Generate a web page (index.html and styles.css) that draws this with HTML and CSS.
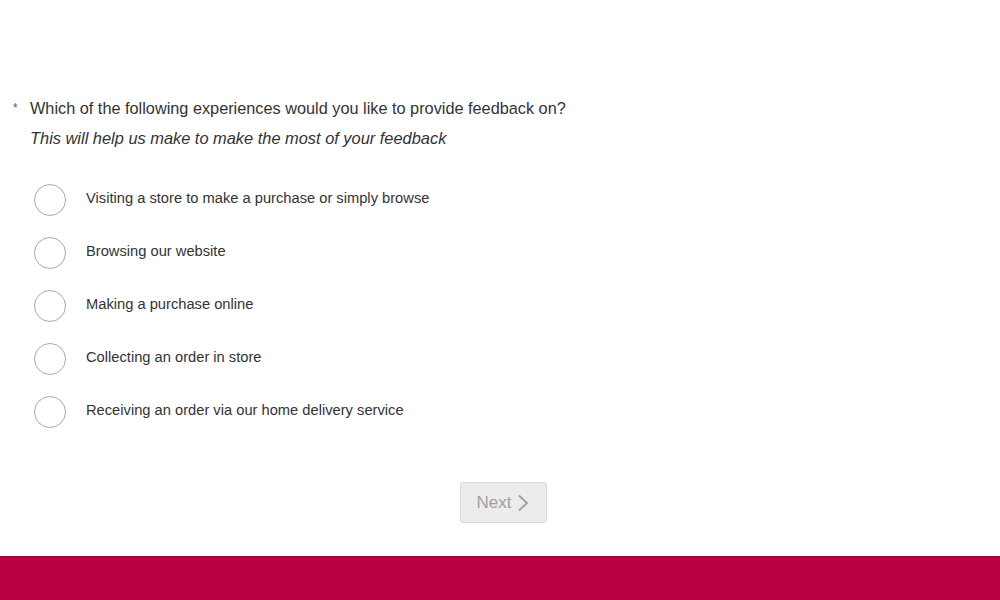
FILE: index.html
```html
<!DOCTYPE html>
<html lang="en">
<head>
    <meta charset="UTF-8">
    <title>Feedback Survey</title>
    <link rel="stylesheet" href="styles.css">
</head>
<body>
    <div class="page">
        <div class="survey">
            <div class="question">
                <span class="required">*</span>
                <span class="questionText">Which of the following experiences would you like to provide feedback on?</span>
            </div>
            <p class="hint">This will help us make to make the most of your feedback</p>

            <ul class="options">
                <li class="option"><span class="radio"></span><span class="optionLabel">Visiting a store to make a purchase or simply browse</span></li>
                <li class="option"><span class="radio"></span><span class="optionLabel">Browsing our website</span></li>
                <li class="option"><span class="radio"></span><span class="optionLabel">Making a purchase online</span></li>
                <li class="option"><span class="radio"></span><span class="optionLabel">Collecting an order in store</span></li>
                <li class="option"><span class="radio"></span><span class="optionLabel">Receiving an order via our home delivery service</span></li>
            </ul>

            <div class="actions">
                <button type="button" class="nextButton" disabled>Next
                    <svg class="chevron" width="12" height="18" viewBox="0 0 12 18"><path d="M2 1.5 L10 9 L2 16.5" fill="none" stroke="#a0a0a0" stroke-width="1.8"/></svg>
                </button>
            </div>
        </div>
        <div class="footer"></div>
    </div>
</body>
</html>
```

FILE: styles.css
```css
body {
    font-family: "Liberation Sans", Arial, sans-serif;
    background-color: #fff;
    margin: 0;
    padding: 0;
    color: #333;
}

.page {
    height: 600px;
    display: flex;
    flex-direction: column;
}

.survey {
    flex: 1;
    padding: 98px 0 0 0;
}

.question {
    display: flex;
    align-items: flex-start;
    font-size: 16.3px;
    line-height: 20px;
}

.required {
    width: 30px;
    box-sizing: border-box;
    padding-left: 13px;
    font-size: 12px;
    color: #555;
}

.questionText {
    color: #333;
}

.hint {
    margin: 10px 0 0 30px;
    font-size: 16.4px;
    line-height: 20px;
    font-style: italic;
    color: #333;
}

.options {
    list-style: none;
    margin: 25px 0 0 0;
    padding: 0 0 0 34px;
}

.option {
    display: flex;
    align-items: center;
    height: 53px;
}

.radio {
    width: 30px;
    height: 30px;
    border: 1.5px solid #aaa;
    border-radius: 50%;
    flex-shrink: 0;
}

.optionLabel {
    margin-left: 20px;
    font-size: 14.7px;
    color: #333;
    position: relative;
    top: -2px;
}

.actions {
    display: flex;
    justify-content: center;
    margin-top: 44px;
    padding-left: 6px;
}

.nextButton {
    width: 87px;
    height: 41px;
    background-color: #ececec;
    border: 1px solid #dadada;
    border-radius: 3px;
    color: #a0a0a0;
    font-family: "Liberation Sans", Arial, sans-serif;
    font-size: 17px;
    display: flex;
    align-items: center;
    justify-content: center;
    gap: 6px;
    padding: 0;
}

.footer {
    height: 43px;
    background-color: #b80043;
    border-top: 1px solid #9a0038;
}
```
